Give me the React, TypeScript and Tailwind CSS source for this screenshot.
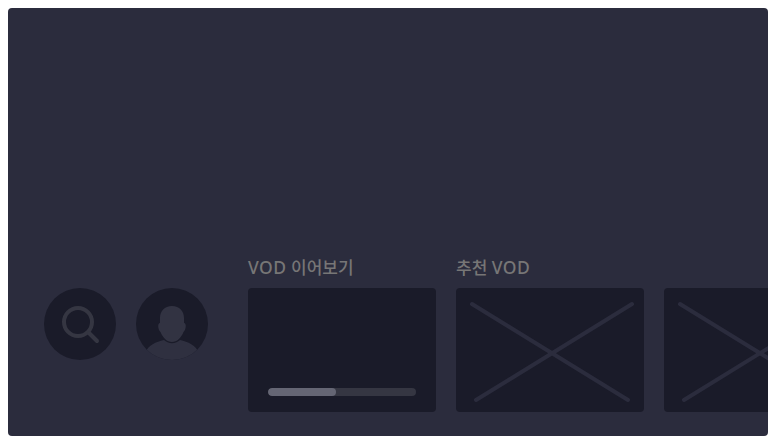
import React from "react";

function SearchButton() {
  return (
    <svg className="block size-[72px] shrink-0" viewBox="0 0 72 72" fill="none">
      <circle cx="36" cy="36" r="36" fill="#1a1b29" />
      <circle cx="34" cy="34" r="14" stroke="#353642" strokeWidth="4" />
      <path d="M45 45L53 53" stroke="#353642" strokeWidth="4" strokeLinecap="round" />
    </svg>
  );
}

function ProfileButton() {
  return (
    <div className="size-[72px] shrink-0 overflow-hidden rounded-full bg-[#1a1b29]">
      <svg className="block size-full" viewBox="0 0 72 72" fill="none">
        <path d="M10 64C12 57 20 54 28 52C30 54 33 55.200 36 55.200C39 55.200 42 54 44 52C52 54 60 57 62 64V72H10Z" fill="#2f3040" />
        <path d="M36 18C43.500 18 48 23 48 30V35C50.800 35 50 42 47.500 44C45 50 41 54 36 54C31 54 27 50 24.500 44C22 42 21.200 35 24 35V30C24 23 28.500 18 36 18Z" fill="#323342" />
      </svg>
    </div>
  );
}

function PlaceholderCard() {
  return (
    <div className="h-[124px] w-[188px] shrink-0 rounded bg-[#1a1b29]">
      <svg className="block size-full" viewBox="0 0 188 124" fill="none">
        <path d="M16 16L172 112M176 16L20 112" stroke="#2b2c3d" strokeWidth="4" strokeLinecap="round" />
      </svg>
    </div>
  );
}

function Title({ children }: { children?: React.ReactNode }) {
  return <h2 className="h-6 whitespace-nowrap text-[17px] leading-[22px] font-medium text-[#777676]">{children}</h2>;
}

export default function App() {
  return (
    <div className="h-[444px] w-[776px] bg-white p-2 font-['Noto_Sans','Noto_Sans_CJK_KR',sans-serif]">
      <main className="flex h-[428px] flex-col justify-end overflow-hidden rounded bg-[#2b2c3d] pb-6 pl-9">
        <div className="flex items-start gap-5">
          <nav className="flex gap-5 pt-8">
            <SearchButton />
            <ProfileButton />
          </nav>
          <section className="ml-5 flex shrink-0 flex-col gap-2">
            <Title><span className="text-[17.5px] tracking-[0.5px]">VOD</span> 이어보기</Title>
            <div className="flex h-[124px] w-[188px] items-end rounded bg-[#1a1b29] px-5 pb-4">
              <div className="h-2 w-full overflow-hidden rounded-full bg-[#353642]">
                <div className="h-full w-[68px] rounded-full bg-[#656674]" />
              </div>
            </div>
          </section>
          <section className="flex shrink-0 flex-col gap-2">
            <Title>추천 <span className="text-[17.5px] tracking-[0.5px]">VOD</span></Title>
            <div className="flex gap-5">
              <PlaceholderCard />
              <PlaceholderCard />
            </div>
          </section>
        </div>
      </main>
    </div>
  );
}
